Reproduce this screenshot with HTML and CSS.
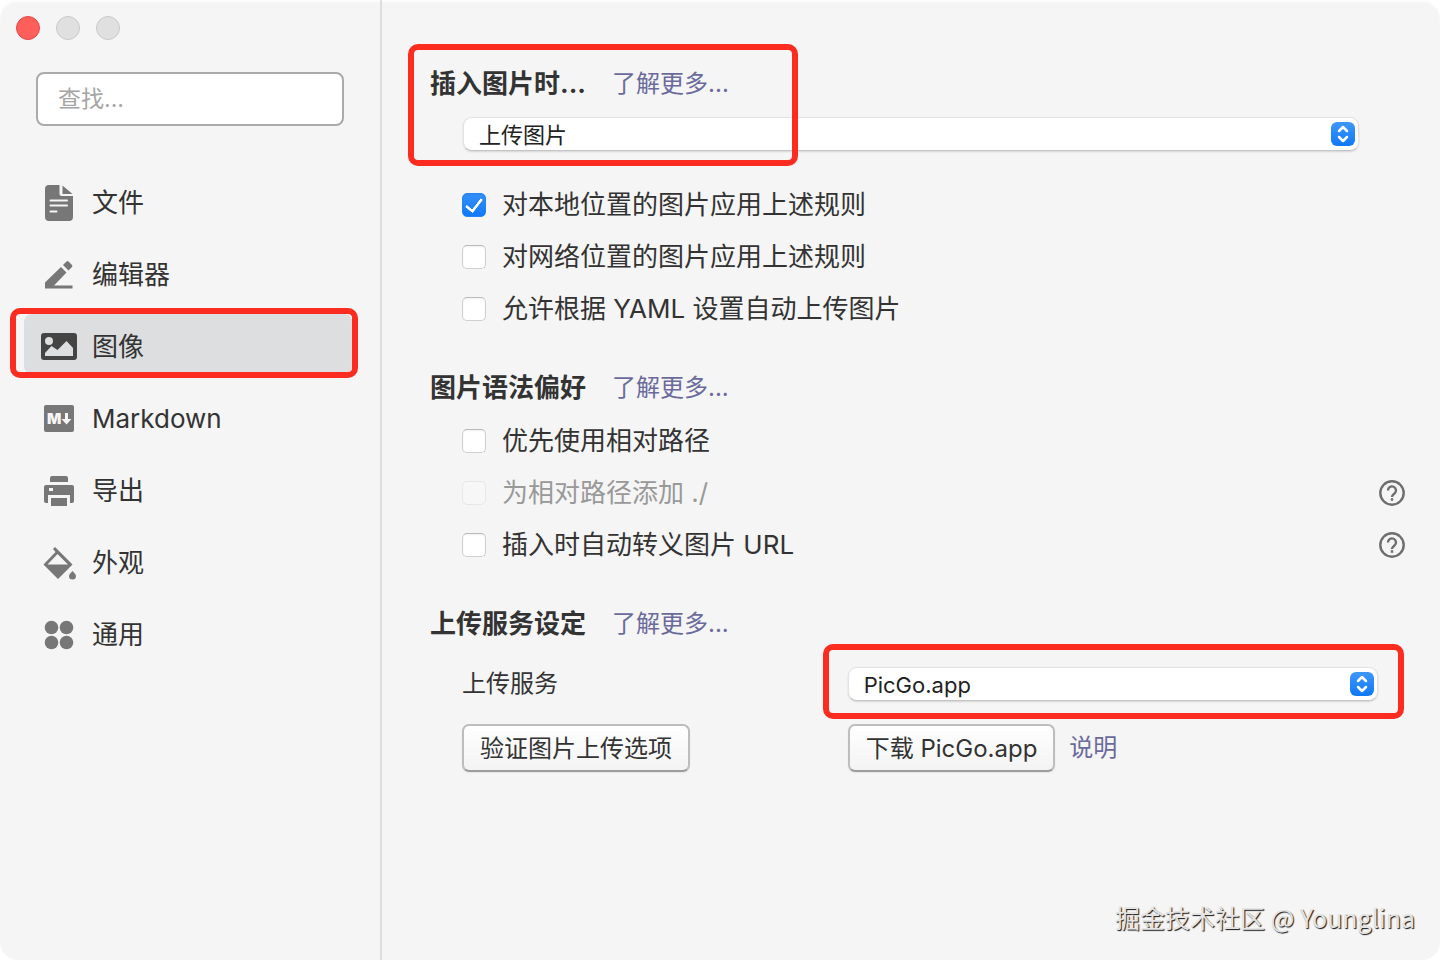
FILE: index.html
```html
<!DOCTYPE html>
<html lang="zh-CN">
<head>
<meta charset="utf-8">
<meta name="viewport" content="width=device-width, initial-scale=1">
<title>图像</title>
<link rel="stylesheet" href="styles.css">
</head>
<body>
<div class="window">
  <aside class="sidebar">
    <div class="lights">
      <button class="light light-close" type="button" aria-label="关闭"></button>
      <button class="light" type="button" aria-label="最小化"></button>
      <button class="light" type="button" aria-label="缩放"></button>
    </div>
    <input class="search" type="search" placeholder="查找..." aria-label="查找">
    <nav class="nav">
      <a class="nav-item" href="#file">
        <svg class="icon" viewBox="-1 0 36 36"><path d="M7 0h10.500v9a2 2 0 0 0 2 2H31v21a4 4 0 0 1-4 4H7a4 4 0 0 1-4-4V4a4 4 0 0 1 4-4z"/><path d="M20.500 0.500L30.500 9h-10z"/><path class="cut" d="M8.500 15.500h16.500M8.500 20.500h16.500M8.500 26.500h6"/></svg>
        <span>文件</span>
      </a>
      <a class="nav-item" href="#editor">
        <svg class="icon" viewBox="-1 0 36 36"><path d="M3 31.500v-6L19 10l5.500 5.500L12 28.500h18.500v3z"/><path d="M21 8l3.500-3.500a1.500 1.500 0 0 1 2 0l3.500 3.500a1.500 1.500 0 0 1 0 2L26.500 13.500z"/></svg>
        <span>编辑器</span>
      </a>
      <a class="nav-item nav-item-active" href="#image" aria-current="page">
        <svg class="icon" viewBox="0 0 36 36"><path fill-rule="evenodd" d="M3 4h30a3 3 0 0 1 3 3v21a3 3 0 0 1-3 3H3a3 3 0 0 1-3-3V7a3 3 0 0 1 3-3zM8 8a4 4 0 1 0 0 8 4 4 0 0 0 0-8zM4 27h28v-8l-6.500-7-9 9-6-4L4 24z"/></svg>
        <span>图像</span>
        <i class="mark mark-nav"></i>
      </a>
      <a class="nav-item" href="#markdown">
        <svg class="icon" viewBox="0 0 36 36"><rect x="3" y="4" width="30" height="27" rx="2"/><text class="logo-letter" x="6" y="23">M</text><path class="cut-fill" d="M24 12h3v6h3.500l-5 5.500-5-5.500H24z"/></svg>
        <span>Markdown</span>
      </a>
      <a class="nav-item" href="#export">
        <svg class="icon" viewBox="0 0 36 36"><path d="M9 5a2 2 0 0 1 2-2h14a2 2 0 0 1 2 2v4H9z"/><path fill-rule="evenodd" d="M5 12h26a2 2 0 0 1 2 2v14a2 2 0 0 1-2 2h-2v-8H7v8H5a2 2 0 0 1-2-2V14a2 2 0 0 1 2-2zM8 15v3h4v-3z"/><path d="M10 25h16v8H10z"/></svg>
        <span>导出</span>
      </a>
      <a class="nav-item" href="#appearance">
        <svg class="icon" viewBox="0 0 36 36"><path fill-rule="evenodd" d="M12 4l2-2 17.500 17.500L17 34 2.500 19.500 14.500 7zM16.500 9L6.500 19.500h20.500z"/><path d="M31.500 26c2.500 2.500 3.500 4 3.500 5a3.500 3.500 0 0 1-7 0c0-1 1-2.500 3.500-5z"/></svg>
        <span>外观</span>
      </a>
      <a class="nav-item" href="#general">
        <svg class="icon" viewBox="0 0 36 36"><circle cx="10.500" cy="10.500" r="6.800"/><circle cx="25.500" cy="10.500" r="6.800"/><circle cx="10.500" cy="25.500" r="6.800"/><circle cx="25.500" cy="25.500" r="6.800"/></svg>
        <span>通用</span>
      </a>
    </nav>
  </aside>

  <main class="main">
    <section class="section">
      <i class="mark mark-insert"></i>
      <header class="section-head">
        <h2 class="title" id="insert-title">插入图片时...</h2>
        <a class="link" href="#insert-help">了解更多...</a>
      </header>
      <div class="picker picker-insert">
        <select class="select" aria-labelledby="insert-title"><option>上传图片</option></select>
        <svg class="stepper" viewBox="0 0 24 24"><path d="M8 9l4-4 4 4M8 15l4 4 4-4"/></svg>
      </div>
      <div class="options">
        <div class="option"><label class="choice"><input class="check" type="checkbox" checked><span>对本地位置的图片应用上述规则</span></label></div>
        <div class="option"><label class="choice"><input class="check" type="checkbox"><span>对网络位置的图片应用上述规则</span></label></div>
        <div class="option"><label class="choice"><input class="check" type="checkbox"><span>允许根据 YAML 设置自动上传图片</span></label></div>
      </div>
    </section>

    <section class="section">
      <header class="section-head">
        <h2 class="title">图片语法偏好</h2>
        <a class="link" href="#syntax-help">了解更多...</a>
      </header>
      <div class="options">
        <div class="option"><label class="choice"><input class="check" type="checkbox"><span>优先使用相对路径</span></label></div>
        <div class="option">
          <label class="choice choice-disabled"><input class="check" type="checkbox" disabled><span>为相对路径添加 ./</span></label>
          <button class="help" type="button" aria-label="帮助"><svg viewBox="0 0 26 26"><circle cx="13" cy="13" r="11.700"/><path d="M9 10.500a4 4 0 1 1 6.500 3c-1.500 1.200-2.500 1.700-2.500 3.500"/><path d="M13 18.200v2.600"/></svg></button>
        </div>
        <div class="option">
          <label class="choice"><input class="check" type="checkbox"><span>插入时自动转义图片 URL</span></label>
          <button class="help" type="button" aria-label="帮助"><svg viewBox="0 0 26 26"><circle cx="13" cy="13" r="11.700"/><path d="M9 10.500a4 4 0 1 1 6.500 3c-1.500 1.200-2.500 1.700-2.500 3.500"/><path d="M13 18.200v2.600"/></svg></button>
        </div>
      </div>
    </section>

    <section class="section">
      <header class="section-head">
        <h2 class="title">上传服务设定</h2>
        <a class="link" href="#upload-help">了解更多...</a>
      </header>
      <div class="upload">
        <label class="upload-label" for="service">上传服务</label>
        <div class="picker">
          <select class="select" id="service"><option>PicGo.app</option></select>
          <svg class="stepper" viewBox="0 0 24 24"><path d="M8 9l4-4 4 4M8 15l4 4 4-4"/></svg>
          <i class="mark mark-service"></i>
        </div>
        <div class="actions"><button class="button" type="button">验证图片上传选项</button></div>
        <div class="actions">
          <button class="button" type="button">下载 PicGo.app</button>
          <a class="link" href="#manual">说明</a>
        </div>
      </div>
    </section>
  </main>
  <p class="credit">掘金技术社区 @ Younglina</p>
</div>
</body>
</html>
```
FILE: styles.css
```css
* {
  box-sizing: border-box;
}

body {
  margin: 0;
  background: #fff;
  color: #333;
  font-family: Inter, "Noto Sans CJK SC", sans-serif;
  font-size: 26px;
  line-height: 40px;
}

button,
input,
select {
  margin: 0;
  font-family: inherit;
  color: inherit;
}

a {
  color: inherit;
  text-decoration: none;
}

.window {
  position: relative;
  display: flex;
  min-height: 100vh;
  border-radius: 18px;
  background: #f5f5f5;
  box-shadow: inset 0 2px 1px #fcfcfc;
  overflow: hidden;
}

.sidebar {
  flex: 0 0 382px;
  padding-top: 16px;
  border-right: 2px solid #dedede;
}

.lights {
  display: flex;
  gap: 16px;
  padding-left: 16px;
}

.light {
  width: 24px;
  height: 24px;
  padding: 0;
  border: 1px solid #c9c9c9;
  border-radius: 50%;
  background: #e0e0e0;
}

.light-close {
  border-color: #e2494a;
  background: #fe5f5b;
}

.search {
  display: block;
  width: 308px;
  height: 54px;
  margin: 32px 36px 44px;
  padding: 0 20px;
  border: 2px solid #aaa;
  border-radius: 8px;
  background: #fff;
  font-size: 23px;
  appearance: none;
}

.search::placeholder {
  color: #a5a5a5;
}

.nav {
  display: flex;
  flex-direction: column;
  gap: 12px;
  padding: 0 28px 0 24px;
}

.nav-item {
  position: relative;
  display: flex;
  align-items: center;
  gap: 15px;
  height: 60px;
  padding: 6px 0 0 17px;
  border-radius: 8px;
}

.nav-item-active {
  background: #dcdee0;
}

.icon {
  width: 36px;
  height: 36px;
  fill: #777;
}

.nav-item-active .icon {
  fill: #444;
}

.cut {
  fill: none;
  stroke: #f5f5f5;
  stroke-width: 2;
  stroke-linecap: round;
}

.cut-fill {
  fill: #f5f5f5;
}

.logo-letter {
  fill: #f5f5f5;
  font-size: 15px;
  font-weight: 900;
}

.mark {
  position: absolute;
  z-index: 1;
  border: 6px solid #fc2d20;
  border-radius: 10px;
  pointer-events: none;
}

.mark-nav {
  inset: -6px -6px -4px -14px;
}

.mark-insert {
  top: -20px;
  left: -22px;
  width: 390px;
  height: 122px;
}

.mark-service {
  inset: -23px -26px -18px -25px;
}

.main {
  display: flex;
  flex: 1;
  flex-direction: column;
  gap: 33px;
  min-width: 0;
  padding: 64px 35px 64px 48px;
}

.section {
  position: relative;
}

.section-head {
  display: flex;
  align-items: center;
  gap: 26px;
}

.title {
  margin: 0;
  font-size: 26px;
  font-weight: 700;
}

.link {
  color: #6b6a9c;
  font-size: 24px;
}

.picker {
  position: relative;
}

.picker-insert {
  margin: 13px 46px 21px 33px;
}

.select {
  display: block;
  width: 100%;
  height: 34px;
  padding: 1px 44px 0 15px;
  border: 1px solid #e2e2e2;
  border-bottom-color: #c4c4c4;
  border-radius: 9px;
  background: #fff;
  box-shadow: 0 1px 2px #0002;
  color: #222;
  font-size: 22px;
  appearance: none;
}

.stepper {
  position: absolute;
  top: 5px;
  right: 4px;
  width: 24px;
  height: 24px;
  border-radius: 6px;
  background: linear-gradient(#3f97fb, #0f78f8);
  fill: none;
  stroke: #fff;
  stroke-width: 2.5;
  stroke-linecap: round;
  stroke-linejoin: round;
  pointer-events: none;
}

.options {
  padding: 7px 0 0 32px;
}

.option {
  display: flex;
  align-items: center;
  justify-content: space-between;
  height: 52px;
}

.choice {
  display: flex;
  align-items: center;
  gap: 16px;
}

.choice-disabled {
  color: #999;
}

.check {
  position: relative;
  width: 24px;
  height: 24px;
  border: 1px solid #cfcfcf;
  border-top-color: #bbb;
  border-radius: 5px;
  background: #fff;
  box-shadow: inset 0 1px 2px #0001;
  appearance: none;
}

.check:checked {
  border-color: #2186fa;
  background: linear-gradient(#3590fb, #1079f9);
}

.check:checked::before {
  content: "";
  position: absolute;
  top: 1px;
  left: 6px;
  box-sizing: border-box;
  width: 10px;
  height: 17px;
  border: solid #fff;
  border-width: 0 3px 3px 0;
  border-radius: 1px;
  transform: rotate(38deg);
}

.check:disabled {
  border-color: #e8e8e8;
  background: #f7f7f7;
  box-shadow: none;
}

.help {
  width: 26px;
  height: 26px;
  padding: 0;
  border: 0;
  background: none;
}

.help svg {
  display: block;
  fill: none;
  stroke: #6e6e6e;
  stroke-width: 2.4;
}

.upload {
  display: grid;
  grid-template-columns: 8fr 11fr;
  row-gap: 23px;
  padding: 23px 27px 0 32px;
}

.upload-label {
  font-size: 24px;
  line-height: 34px;
}

.actions {
  display: flex;
  align-items: center;
  gap: 14px;
}

.button {
  height: 48px;
  padding: 0 16px 3px;
  border: 2px solid #bdbdbd;
  border-bottom-color: #9c9c9c;
  border-radius: 7px;
  background: linear-gradient(#fff, #f3f3f3);
  box-shadow: 0 1px 2px #0001;
  font-size: 24px;
}

.credit {
  position: absolute;
  right: 25px;
  bottom: 23px;
  margin: 0;
  color: #e4e4e4;
  font-family: "Noto Sans CJK SC", sans-serif;
  font-size: 25px;
  text-shadow: 1px 1px 1px #111;
}
```
